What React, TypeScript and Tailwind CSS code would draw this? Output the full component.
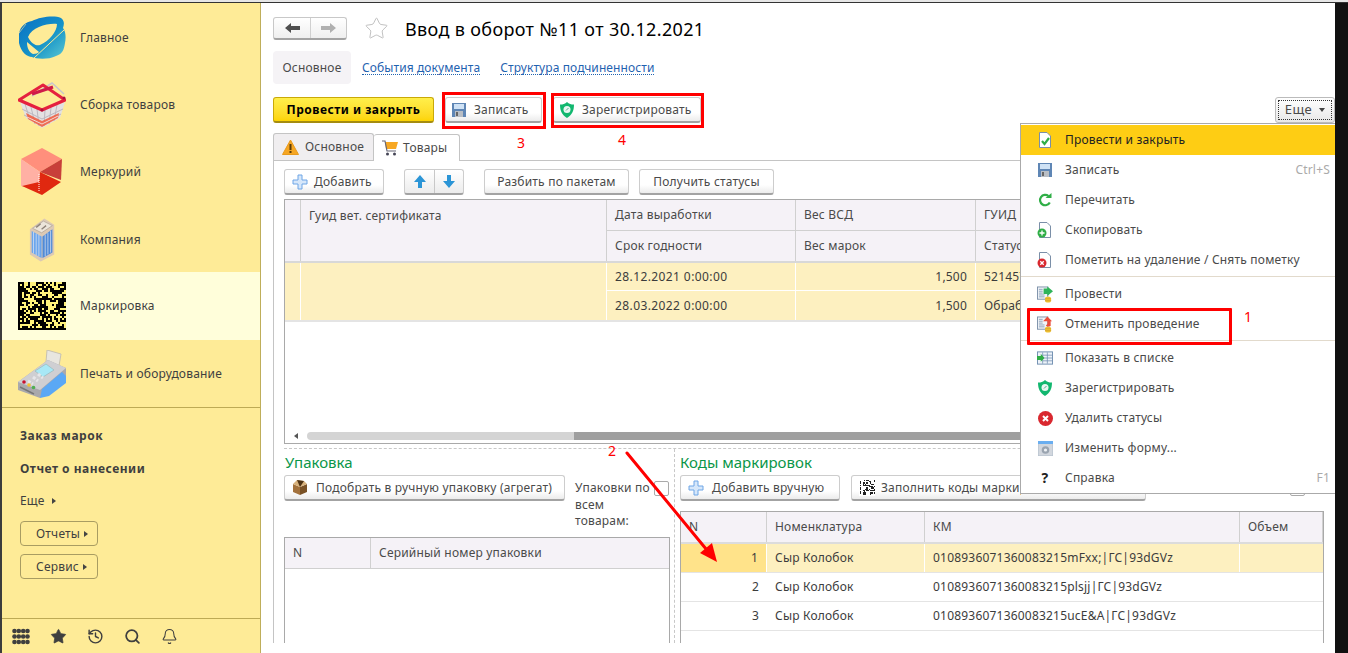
import { Star, History, Search, Bell } from "lucide-react";
import type { ReactNode } from "react";

// deterministic pattern for the data matrix pictures
function matrixCells(size: number, seed: number) {
  const cells: [number, number][] = [];
  let s = seed;
  for (let y = 0; y < size - 1; y++) {
    for (let x = 1; x < size; x++) {
      s = (s * 1103515245 + 12345) & 0x7fffffff;
      if ((s >> 16) % 100 < 42) cells.push([x, y]);
    }
  }
  return cells;
}

const DataMatrix = ({ size, bg, fg, seed, px }: { size: number; bg: string; fg: string; seed: number; px: number }) => (
  <svg width={px} height={px} viewBox={`0 0 ${size} ${size}`} shapeRendering="crispEdges">
    <rect width={size} height={size} fill={bg} />
    {matrixCells(size, seed).map(([x, y]) => (
      <rect key={`${x}-${y}`} x={x} y={y} width={1} height={1} fill={fg} />
    ))}
  </svg>
);

const OrbitLogo = () => (
  <svg width="48" height="44" viewBox="0 0 48 44">
    <defs>
      <linearGradient id="orb" x1="0" y1="0" x2="1" y2="1">
        <stop offset="0" stopColor="#0a6fc4" />
        <stop offset="0.55" stopColor="#1492c8" />
        <stop offset="1" stopColor="#5cc8d2" />
      </linearGradient>
    </defs>
    <path
      fillRule="evenodd"
      fill="url(#orb)"
      d="M1 18C2 10 8 6 14 5C22 1 36 -1 43 2C47 5 46 9 45 12C48 16 48 22 47 27C46 33 45 38 38 40C30 44 18 43 14 41C9 41 3 36 1 27ZM10 21C14 29 19 30 22 29C31 25 39 16 39 8C30 7 14 11 10 21ZM9 26C9 32 11 36 15 38C18 38 20 37 21 36Z"
    />
    <path d="M16 42L46 14" stroke="#feeb97" strokeWidth="1" />
    <path d="M1 17L8 8" stroke="#feeb97" strokeWidth="0.6" />
  </svg>
);

const Basket = () => (
  <svg width="48" height="46" viewBox="0 0 48 46" fill="none">
    <path d="M14 14L34 1L46 12" stroke="#c9c6cc" strokeWidth="1.5" />
    <path d="M2 20L8 36L24 46L42 36L47 20L24 29Z" fill="#e4e1e2" />
    <path d="M7 22L12 38M13 25L17 42M19 27L21 44M27 28L26 44M33 26L31 42M39 23L36 39M4 27L24 37L45 27M6 33L24 42L43 32" stroke="#bcb8c0" strokeWidth="1" />
    <path d="M8 31L24 39L41 31L40 36L24 45L10 37Z" fill="#f1593c" opacity="0.85" />
    <path d="M9 35L24 42L40 34" stroke="#f3dcd4" strokeWidth="1" />
    <path d="M1 18L25 3L47 18L24 28Z" stroke="#e5203f" strokeWidth="3" strokeLinejoin="round" />
    <path d="M14 12L35 5" stroke="#cf1a48" strokeWidth="3" />
    <circle cx="24" cy="28" r="1.500" fill="#a8123a" />
    <circle cx="46" cy="16" r="1.500" fill="#a8123a" />
  </svg>
);

const Cube = () => (
  <svg width="44" height="48" viewBox="0 0 44 48">
    <path d="M22 0L42 11L20 24L1 11Z" fill="#ff8f7c" />
    <path d="M1 11L20 24L19 42L1 38Z" fill="#ffb0a4" />
    <path d="M42 11L41 32L20 24Z" fill="#c83f3a" />
    <path d="M20 24L41 34L22 47L2 38L19 34Z" fill="#e02810" />
    <path d="M19 26V44" stroke="#fff" strokeWidth="1" strokeDasharray="1 1" />
  </svg>
);

const Building = () => (
  <svg width="27" height="48" viewBox="0 0 30 48">
    <path d="M1 12L17 0L28 7L28 40L13 48L1 40Z" fill="#dcc9b4" />
    <path d="M3 14L14 20V44L3 38Z" fill="#6aa5ee" />
    <path d="M15 20L26 12V38L15 44Z" fill="#4f8ad8" />
    <path d="M5 15V39M8 17V41M11 18V42M18 18V42M21 16V40M24 14V38" stroke="#dfe5ef" strokeWidth="0.8" />
    <path d="M4 11L16 3L26 8L14 16Z" fill="#ece5da" stroke="#a89c90" strokeWidth="0.7" />
    <path d="M8 10L13 6M14 12L19 8" stroke="#8d8278" strokeWidth="1.500" />
  </svg>
);

const Register = () => (
  <svg width="48" height="48" viewBox="0 0 48 48">
    <path d="M29 0L43 4L41 16L33 19L28 12Z" fill="#e8e6df" stroke="#bbb8ae" strokeWidth="0.8" />
    <path d="M0 32L30 10L48 18V30L22 48L0 40Z" fill="#a9a9ac" />
    <path d="M0 32L30 10L48 18L22 40Z" fill="#cfcfd2" />
    <path d="M17 21L28 14L36 20L25 27Z" fill="#a8e8f6" stroke="#8aa" strokeWidth="0.5" />
    <path d="M15 27L20 31M20 24L25 28M10 31L15 34" stroke="#e6e6e9" strokeWidth="3" strokeDasharray="3 1.500" />
    <circle cx="6" cy="32" r="1.800" fill="#c8102e" />
    <circle cx="11" cy="35" r="1.800" fill="#f2c230" />
    <circle cx="15.500" cy="37.500" r="1.800" fill="#4fae52" />
    <path d="M22 48L24 39L44 22L48 26V33L31 46Z" fill="#5aa8f5" />
    <path d="M2 37L16 44" stroke="#777" strokeWidth="1.400" />
  </svg>
);

const Floppy = () => (
  <svg width="14" height="14" viewBox="0 0 14 14" shapeRendering="crispEdges">
    <rect width="14" height="14" fill="#5f86b5" />
    <rect x="2" y="1" width="10" height="5" fill="#cfe2f5" />
    <rect x="3" y="8" width="8" height="6" fill="#b9bec5" />
    <rect x="4" y="9" width="2" height="4" fill="#666" />
  </svg>
);

const Shield = () => (
  <svg width="16" height="16" viewBox="0 0 16 16">
    <path d="M8 0C10 2 12 2.500 15 2.500C15 9 13 13 8 16C3 13 1 9 1 2.500C4 2.500 6 2 8 0Z" fill="#12b76f" />
    <circle cx="8" cy="7.500" r="3.500" fill="#e9f6f2" />
    <path d="M7 8.500L9.500 6" stroke="#5a8" strokeWidth="1" />
  </svg>
);

const Warn = () => (
  <svg width="17" height="16" viewBox="0 0 17 16">
    <path d="M8.500 1L16.500 15.500H0.500Z" fill="#f6a623" stroke="#e89a1c" strokeLinejoin="round" />
    <rect x="7.500" y="5" width="2" height="6" fill="#5a3b08" />
    <rect x="7.500" y="12" width="2" height="2" fill="#5a3b08" />
  </svg>
);

const Cart = () => (
  <svg width="16" height="16" viewBox="0 0 16 16">
    <path d="M3 2H16L14 9H4Z" fill="#f7a823" />
    <path d="M0 1H3L5 11H14" stroke="#667" strokeWidth="1.200" fill="none" />
    <circle cx="5.500" cy="14" r="1.500" fill="#445" />
    <circle cx="12.500" cy="14" r="1.500" fill="#445" />
  </svg>
);

const Plus = () => (
  <svg width="16" height="16" viewBox="0 0 16 16">
    <path d="M6 1H10V6H15V10H10V15H6V10H1V6H6Z" fill="#d6e7fa" stroke="#6fa6e6" strokeWidth="1" strokeLinejoin="round" />
  </svg>
);

const ArrowV = ({ down }: { down?: boolean }) => (
  <svg width="12" height="13" viewBox="0 0 12 13">
    <path d={down ? "M4 0H8V6H12L6 13L0 6H4Z" : "M6 0L12 7H8V13H4V7H0Z"} fill="#2b95d6" />
  </svg>
);

const BoxIcon = () => (
  <svg width="16" height="15" viewBox="0 0 16 15">
    <path d="M1 4L8 7V15L1 12Z" fill="#a3723d" />
    <path d="M15 4L8 7V15L15 12Z" fill="#7a5226" />
    <path d="M1 4L5 0L12 1L15 4L8 7Z" fill="#d8b27c" />
    <path d="M5 0L8 7L12 1Z" fill="#4e3315" />
  </svg>
);

const DocBase = ({ children }: { children?: ReactNode }) => (
  <svg width="16" height="16" viewBox="0 0 16 16">
    <path d="M2.500 0.500H10L13.500 4V15.500H2.500Z" fill="#fff" stroke="#7b8fa8" />
    {children}
  </svg>
);

const Ledger = ({ up }: { up?: boolean }) => (
  <svg width="17" height="17" viewBox="0 0 17 17">
    <rect x="0.500" y="0.500" width="11" height="13" fill="#f2f5f9" stroke="#7b8fa8" />
    <path d="M2 3H6M2 5H6M2 7H6M2 9H8M2 11H8" stroke="#8aa0b8" strokeWidth="1" />
    <rect x="8.500" y="11" width="6.500" height="6" rx="2" fill="#f0c232" />
    <path d="M8.500 13H15M8.500 15H15" stroke="#c9982a" strokeWidth="0.6" />
    {up ? (
      <path d="M6.500 5L11 0L16 5H14.500V10C12 11 10 10.500 9.500 9.500L11 8V5Z" fill="#ea4d3c" />
    ) : (
      <path d="M7 2H11V0L17 5L11 10V8H7Z" fill="#2fb45a" />
    )}
  </svg>
);

const ListIcon = () => (
  <svg width="17" height="14" viewBox="0 0 17 14">
    <rect x="0.500" y="0.500" width="16" height="13" fill="#eef3f9" stroke="#6f8eb0" />
    <path d="M6 1V13M11 1V13M6 4H16M6 7H16M6 10H16" stroke="#6f8eb0" strokeWidth="0.8" />
    <path d="M0 5H4V2.500L8 7L4 11V9H0Z" fill="#2fae46" />
  </svg>
);

const RedX = () => (
  <svg width="15" height="15" viewBox="0 0 15 15">
    <circle cx="7.500" cy="7.500" r="7.500" fill="#d9282f" />
    <path d="M5 5L10 10M10 5L5 10" stroke="#fff" strokeWidth="2" />
  </svg>
);

const Refresh = () => (
  <svg width="14" height="14" viewBox="0 0 14 14" fill="none">
    <path d="M11.800 9.500A5.200 5.200 0 1 1 10.500 3" stroke="#2fae46" strokeWidth="2.200" />
    <path d="M7.500 5H13.500V0Z" fill="#2fae46" />
  </svg>
);

const FormIcon = () => (
  <svg width="15" height="15" viewBox="0 0 15 15">
    <rect width="15" height="15" rx="1" fill="#d2d7de" stroke="#8fa0b5" strokeWidth="0.5" />
    <rect width="15" height="3" fill="#6aaef0" />
    <circle cx="7.500" cy="9" r="3.800" fill="#9aa4b0" />
    <circle cx="7.500" cy="9" r="1.600" fill="#eef1f4" />
  </svg>
);

const Caret = () => <span className="inline-block border-y-[3px] border-l-[4px] border-y-transparent border-l-[#444]" />;

const Btn = ({ children, className = "" }: { children: ReactNode; className?: string }) => (
  <div className={`flex h-[26px] shrink-0 items-center rounded-[3px] border border-[#cdcdcd] border-b-2 border-b-[#a3a3a3] bg-linear-to-b from-white from-65% to-[#ececec] text-[#4a4a4a] ${className}`}>
    {children}
  </div>
);

const navItems = [
  { label: "Главное", icon: <OrbitLogo /> },
  { label: "Сборка товаров", icon: <Basket /> },
  { label: "Меркурий", icon: <Cube /> },
  { label: "Компания", icon: <Building /> },
  { label: "Маркировка", icon: <DataMatrix size={24} bg="#000" fg="#fff27c" seed={77} px={48} />, active: true },
  { label: "Печать и оборудование", icon: <Register /> },
];

const Sidebar = () => (
  <aside className="flex w-[261px] shrink-0 flex-col border-l-2 border-r border-l-[#3c3c3c] border-r-[#bfae5a] bg-[#feeb97] text-[#3f3f3f]">
    {navItems.map((item) => (
      <div key={item.label} className={`flex h-[67.33px] items-center ${item.active ? "bg-[#fffeda]" : ""}`}>
        <div className={`ml-[16px] flex w-[48px] justify-center ${item.active ? "" : "mt-[2px]"}`}>{item.icon}</div>
        <span className={`ml-[14px] ${item.active ? "" : "mt-[2px]"}`}>{item.label}</span>
      </div>
    ))}
    <div className="flex flex-1 flex-col border-t border-[#bdaa55] pl-[18px] pt-[12px]">
      <div className="flex h-[32.5px] items-center font-bold tracking-[0.5px]">Заказ марок</div>
      <div className="flex h-[32.5px] items-center font-bold tracking-[0.5px]">Отчет о нанесении</div>
      <div className="flex h-[32.5px] items-center gap-[7px]">Еще <Caret /></div>
      <div className="mt-[4px] flex flex-col gap-[8px]">
        {["Отчеты", "Сервис"].map((t) => (
          <div key={t} className="flex h-[25px] w-[78px] items-center gap-[4px] rounded-[4px] border border-[#a89c62] pl-[15px]">
            {t} <Caret />
          </div>
        ))}
      </div>
    </div>
    <div className="flex h-[35px] items-center gap-[20px] border-t border-[#bdaa55] pl-[10px] text-[#3f3f3f]">
      <svg width="18" height="17" viewBox="0 0 18 17" fill="#3f3f3f">
        {[3, 8.500, 14].map((y) => [2.500, 6.800, 11.200, 15.500].map((x) => <circle key={`${x}-${y}`} cx={x} cy={y} r="2.300" />))}
      </svg>
      <Star size={17} fill="#3f3f3f" strokeWidth={1} />
      <History size={17} strokeWidth={2} />
      <Search size={17} strokeWidth={2.500} />
      <Bell size={17} strokeWidth={1.500} />
    </div>
  </aside>
);

const mainCell = "flex items-center px-[8px] border-r border-b";

const TopTable = () => (
  <div className="flex h-[245px] flex-col overflow-hidden border border-r-0 border-[#a9a9a9]">
    <div className="grid grid-cols-[16px_306px_189px_180px_1fr] grid-rows-[31px_30px] border-b-2 border-[#d8d8d8] bg-[#f5f2f7] text-[#4a4a4a]">
      <div className="row-span-2 border-r border-[#d0d0d0]" />
      <div className="row-span-2 border-r border-[#d0d0d0] px-[8px] pt-[7px]">Гуид вет. сертификата</div>
      <div className={`${mainCell} border-[#d0d0d0]`}>Дата выработки</div>
      <div className={`${mainCell} border-[#d0d0d0]`}>Вес ВСД</div>
      <div className={`${mainCell} border-[#d0d0d0]`}>ГУИД</div>
      <div className="flex items-center border-r border-[#d0d0d0] px-[8px]">Срок годности</div>
      <div className="flex items-center border-r border-[#d0d0d0] px-[8px]">Вес марок</div>
      <div className="flex items-center border-r border-[#d0d0d0] px-[8px]">Статус</div>
    </div>
    <div className="grid grid-cols-[16px_306px_189px_180px_1fr] grid-rows-[28px_29px] border-b-2 border-[#e4e4e4] bg-[#fdf0c0] text-[#3c3c3c]">
      <div className="row-span-2 border-r border-white" />
      <div className="row-span-2 border-r border-white" />
      <div className={`${mainCell} border-white tracking-[0.4px]`}>28.12.2021 0:00:00</div>
      <div className={`${mainCell} justify-end border-white`}>1,500</div>
      <div className={`${mainCell} border-white`}>5214572</div>
      <div className="flex items-center border-r border-white px-[8px] tracking-[0.4px]">28.03.2022 0:00:00</div>
      <div className="flex items-center justify-end border-r border-white px-[8px]">1,500</div>
      <div className="flex items-center border-r border-white px-[8px]">Обработан</div>
    </div>
    <div className="flex-1" />
    <div className="mb-[3px] flex h-[8px] items-center pl-[9px]">
      <span className="mr-[9px] inline-block border-y-[3px] border-r-[4px] border-y-transparent border-r-[#555]" />
      <div className="h-[8px] w-[267px] rounded-l-full bg-[#d4d4d4]" />
      <div className="h-[8px] flex-1 bg-[#9f9f9f]" />
    </div>
  </div>
);

const PackPane = () => (
  <div className="w-[391px] shrink-0 border-r border-dashed border-[#c8c8c8] pr-[4px]">
    <div className="flex h-[25px] items-center pl-px pt-[2px] text-[15px] leading-none tracking-normal text-[#0a9648]">Упаковка</div>
    <div className="mt-[1px] flex h-[62px] items-start">
      <Btn className="w-[281px] gap-[8px] pl-[7px]">
        <BoxIcon /> Подобрать в ручную упаковку (агрегат)
      </Btn>
      <div className="ml-[10px] w-[79px] pt-[5px] leading-[16.5px] text-[#4a4a4a]">Упаковки по всем товарам:</div>
      <div className="mt-[6px] h-[15px] w-[15px] shrink-0 rounded-[2px] border border-[#aaa] bg-white" />
    </div>
    <div className="h-[106px] border border-b-0 border-[#a9a9a9]">
      <div className="grid h-[31px] grid-cols-[86px_1fr] border-b border-[#d0d0d0] bg-[#f5f2f7] text-[#4a4a4a]">
        <div className="flex items-center border-r border-[#d0d0d0] px-[8px]">N</div>
        <div className="flex items-center px-[8px]">Серийный номер упаковки</div>
      </div>
    </div>
  </div>
);

const codes = [
  { n: 1, km: "0108936071360083215mFxx;|ГС|93dGVz" },
  { n: 2, km: "0108936071360083215plsjj|ГС|93dGVz" },
  { n: 3, km: "0108936071360083215ucE&A|ГС|93dGVz" },
];

const CodesPane = () => (
  <div className="min-w-0 flex-1 pl-[5px] pr-[11px]">
    <div className="flex h-[25px] items-center pt-[2px] text-[15px] leading-none tracking-normal text-[#0a9648]">Коды маркировок</div>
    <div className="mt-[1px] flex h-[36px] items-start gap-[11px]">
      <Btn className="w-[160px] gap-[8px] pl-[7px]">
        <Plus /> Добавить вручную
      </Btn>
      <Btn className="w-[295px] gap-[6px] overflow-hidden whitespace-nowrap pl-[7px]">
        <DataMatrix size={13} bg="#fff" fg="#222" seed={5} px={16} />
        <span className="w-[140px] overflow-hidden">Заполнить коды маркировки</span>
      </Btn>
      <div className="ml-auto mr-[19px] mt-[6px] h-[15px] w-[15px] rounded-[2px] border border-[#aaa]" />
    </div>
    <div className="h-[132px] border border-b-0 border-[#a9a9a9]">
      <div className="grid h-[32px] grid-cols-[86px_158px_315px_1fr] border-b-2 border-[#dcdcdc] bg-[#f5f2f7] text-[#4a4a4a]">
        {["N", "Номенклатура", "КМ", "Объем"].map((h) => (
          <div key={h} className="flex items-center border-r border-[#d0d0d0] px-[8px]">{h}</div>
        ))}
      </div>
      {codes.map((row) => (
        <div key={row.n} className={`grid h-[29px] grid-cols-[86px_158px_315px_1fr] border-b border-[#e4e4e4] text-[#3c3c3c] ${row.n === 1 ? "bg-[#fdf0c0]" : ""}`}>
          <div className={`flex items-center justify-end px-[8px] ${row.n === 1 ? "border-r border-white bg-[#ffe38a]" : ""}`}>{row.n}</div>
          <div className={`flex items-center px-[8px] ${row.n === 1 ? "border-r border-white" : ""}`}>Сыр Колобок</div>
          <div className={`flex items-center px-[8px] ${row.n === 1 ? "border-r border-white" : ""}`}>{row.km}</div>
          <div />
        </div>
      ))}
    </div>
  </div>
);

const menuGroups = [
  [
    { label: "Провести и закрыть", icon: <DocBase><path d="M5 9L7.500 12L12 6" stroke="#2fae46" strokeWidth="2.200" fill="none" /></DocBase>, active: true },
    { label: "Записать", icon: <Floppy />, hint: "Ctrl+S" },
    { label: "Перечитать", icon: <Refresh /> },
    { label: "Скопировать", icon: <DocBase><circle cx="5" cy="11" r="4.500" fill="#2fae46" /><path d="M2.500 11H7.500M5 8.500V13.500" stroke="#fff" strokeWidth="1.300" /></DocBase> },
    { label: "Пометить на удаление / Снять пометку", icon: <DocBase><circle cx="5" cy="11" r="4.500" fill="#d9282f" /><path d="M3.300 9.300L6.700 12.700M6.700 9.300L3.300 12.700" stroke="#fff" strokeWidth="1.300" /></DocBase> },
  ],
  [
    { label: "Провести", icon: <Ledger /> },
    { label: "Отменить проведение", icon: <Ledger up /> },
  ],
  [
    { label: "Показать в списке", icon: <ListIcon /> },
    { label: "Зарегистрировать", icon: <Shield /> },
    { label: "Удалить статусы", icon: <RedX /> },
    { label: "Изменить форму...", icon: <FormIcon /> },
    { label: "Справка", icon: <span className="text-[14px] font-bold leading-none text-[#222]">?</span>, hint: "F1" },
  ],
];

const ActionsMenu = () => (
  <div className="absolute left-[1020px] top-[123px] z-10 w-[315px] border border-r-0 border-[#aaa] bg-white pt-[1px] text-[#4a4a4a]">
    {menuGroups.map((group, i) => (
      <div key={i} className={i > 0 ? "mt-[1px] border-t border-[#e2dacc] pt-[2px]" : ""}>
        {group.map((item) => (
          <div key={item.label} className={`flex h-[30px] items-center pl-[16px] pr-[5px] ${"active" in item && item.active ? "bg-[#fecd14] text-[#222]" : ""}`}>
            <div className="flex w-[16px] shrink-0 justify-center">{item.icon}</div>
            <span className="ml-[12px]">{item.label}</span>
            {"hint" in item && item.hint && <span className="ml-auto text-[#aaa]">{item.hint}</span>}
          </div>
        ))}
      </div>
    ))}
  </div>
);

const Annotations = () => (
  <>
    <div className="absolute left-[442px] top-[92px] z-20 h-[37px] w-[104px] border-[3px] border-[#f00]" />
    <div className="absolute left-[551px] top-[93px] z-20 h-[35px] w-[153px] border-[3px] border-[#f00]" />
    <div className="absolute left-[1027px] top-[308px] z-20 h-[37px] w-[205px] rounded-[1px] border-[3px] border-[#f00]" />
    <span className="absolute left-[517px] top-[136px] z-20 text-[14px] leading-none tracking-normal text-[#f00]">3</span>
    <span className="absolute left-[618px] top-[133px] z-20 text-[14px] leading-none tracking-normal text-[#f00]">4</span>
    <span className="absolute left-[1244px] top-[310px] z-20 text-[14px] leading-none tracking-normal text-[#f00]">1</span>
    <span className="absolute left-[608px] top-[444px] z-20 text-[14px] leading-none tracking-normal text-[#f00]">2</span>
    <svg className="absolute left-[620px] top-[446px] z-20" width="105" height="122" viewBox="0 0 105 122">
      <path d="M7 7L91 109" stroke="#f00" strokeWidth="3" strokeLinecap="round" />
      <path d="M97 116L80 107L92 97Z" fill="#f00" />
    </svg>
  </>
);

export default function App() {
  return (
    <div className="relative flex h-[653px] w-[1348px] flex-col overflow-hidden bg-white font-['Liberation_Sans',Arial,sans-serif] text-[12px] tracking-[0.2px]">
      <div className="h-[3px] shrink-0 border-b border-[#333] bg-[#e6e6e6]" />
      <div className="flex min-h-0 flex-1">
        <Sidebar />
        <main className="flex h-[640px] min-w-0 flex-1 flex-col pl-[12px]">
          {/* Header */}
          <div className="mt-[14px] flex h-[23px] items-center">
            <div className="flex h-[23px] w-[74px] rounded-[3px] border border-[#c8c8c8] border-b-2 border-b-[#a3a3a3] bg-linear-to-b from-white to-[#efefef]">
              <div className="flex w-[37px] items-center justify-center border-r border-[#d0d0d0]">
                <svg width="15" height="10" viewBox="0 0 15 10"><path d="M0 5L6 0V3H15V7H6V10Z" fill="#4f4f4f" /></svg>
              </div>
              <div className="flex flex-1 items-center justify-center">
                <svg width="15" height="10" viewBox="0 0 15 10"><path d="M15 5L9 0V3H0V7H9V10Z" fill="#b0b0b0" /></svg>
              </div>
            </div>
            <Star size={25} strokeWidth={0.8} className="ml-[17px] text-[#b4b4b4]" />
            <h1 className="ml-[16px] mt-[2px] text-[18px] font-normal tracking-[0.35px] text-black">Ввод в оборот №11 от 30.12.2021</h1>
          </div>
          {/* Page tabs */}
          <div className="mt-[11px] flex h-[33px] items-center">
            <div className="flex h-[33px] w-[78px] items-center justify-center rounded-[4px] bg-[#f5f3f6] text-[#4a4a4a]">Основное</div>
            <a className="ml-[11px] border-b border-dotted border-[#1f62b0] leading-[13px] tracking-[0.1px] text-[#1f62b0]">События документа</a>
            <a className="ml-[20px] border-b border-dotted border-[#1f62b0] leading-[13px] tracking-[0.1px] text-[#1f62b0]">Структура подчиненности</a>
          </div>
          {/* Command bar */}
          <div className="mt-[13px] flex h-[26px] items-center">
            <div className="flex h-[26px] w-[161px] items-center justify-center rounded-[3px] border border-[#c9a908] border-b-2 border-b-[#a58c10] bg-linear-to-b from-[#ffef4a] to-[#fdd400] font-bold tracking-[0.5px] text-black">
              Провести и закрыть
            </div>
            <Btn className="ml-[11px] w-[97px] gap-[8px] pl-[6px]"><Floppy /> Записать</Btn>
            <Btn className="ml-[11px] w-[148px] gap-[7px] pl-[5px]"><Shield /> Зарегистрировать</Btn>
            <div className="ml-auto flex h-[26px] w-[60px] items-center justify-center rounded-[3px] border border-[#bbb] bg-linear-to-b from-white to-[#e8e8e8] p-[2px] text-[#4a4a4a]">
              <div className="flex h-full w-full items-center justify-center gap-[7px] border border-dotted border-[#333] text-[13px] tracking-[0.5px]">
                Еще <span className="inline-block border-x-[3px] border-t-[4px] border-x-transparent border-t-[#444]" />
              </div>
            </div>
          </div>
          {/* Form tabs */}
          <div className="mt-[10px] flex h-[27px] items-end text-[#4a4a4a]">
            <div className="flex h-[27px] w-[101px] items-center gap-[6px] rounded-t-[3px] border border-b-0 border-[#c4c4c4] bg-[#f0eef0] pl-[8px]"><Warn /> Основное</div>
            <div className="relative top-px flex h-[27px] w-[86px] items-center gap-[5px] rounded-t-[3px] border border-b-0 border-l-0 border-[#c4c4c4] bg-white pl-[8px]"><Cart /> Товары</div>
          </div>
          {/* Panel */}
          <div className="min-h-0 flex-1 border-l border-t border-[#c4c4c4] pl-[10px]">
            <div className="mt-[8px] flex h-[26px] items-center text-[#4a4a4a]">
              <Btn className="w-[100px] gap-[6px] pl-[7px]"><Plus /> Добавить</Btn>
              <div className="ml-[20px] flex h-[26px] w-[60px] rounded-[3px] border border-[#cdcdcd] border-b-2 border-b-[#a3a3a3] bg-linear-to-b from-white to-[#ececec]">
                <div className="flex w-[30px] items-center justify-center border-r border-[#c8c8c8]"><ArrowV /></div>
                <div className="flex flex-1 items-center justify-center"><ArrowV down /></div>
              </div>
              <Btn className="ml-[20px] w-[145px] justify-center">Разбить по пакетам</Btn>
              <Btn className="ml-[10px] w-[135px] justify-center">Получить статусы</Btn>
            </div>
            <div className="mt-[4px]"><TopTable /></div>
            <div className="mt-[4px] flex border-t border-dashed border-[#c8c8c8]">
              <PackPane />
              <CodesPane />
            </div>
          </div>
        </main>
        <div className="w-[13px] shrink-0 bg-[#111]" />
      </div>
      <ActionsMenu />
      <Annotations />
    </div>
  );
}
